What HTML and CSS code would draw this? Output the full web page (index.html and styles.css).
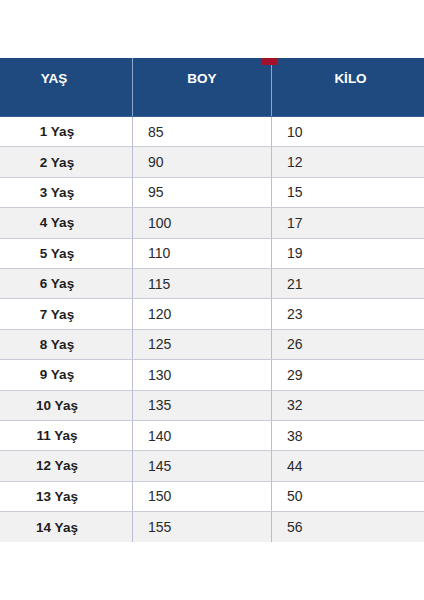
FILE: index.html
```html
<!DOCTYPE html>
<html lang="tr">
<head>
<meta charset="utf-8">
<link rel="stylesheet" href="styles.css">
</head>
<body>
<div class="chart">
  <div class="row head">
    <div class="cell c1">YAŞ</div>
    <div class="cell c2">BOY</div>
    <div class="cell c3">KİLO</div>
    <span class="marker"></span>
  </div>
  <div class="row"><div class="cell c1">1 Yaş</div><div class="cell c2">85</div><div class="cell c3">10</div></div>
  <div class="row alt"><div class="cell c1">2 Yaş</div><div class="cell c2">90</div><div class="cell c3">12</div></div>
  <div class="row"><div class="cell c1">3 Yaş</div><div class="cell c2">95</div><div class="cell c3">15</div></div>
  <div class="row alt"><div class="cell c1">4 Yaş</div><div class="cell c2">100</div><div class="cell c3">17</div></div>
  <div class="row"><div class="cell c1">5 Yaş</div><div class="cell c2">110</div><div class="cell c3">19</div></div>
  <div class="row alt"><div class="cell c1">6 Yaş</div><div class="cell c2">115</div><div class="cell c3">21</div></div>
  <div class="row"><div class="cell c1">7 Yaş</div><div class="cell c2">120</div><div class="cell c3">23</div></div>
  <div class="row alt"><div class="cell c1">8 Yaş</div><div class="cell c2">125</div><div class="cell c3">26</div></div>
  <div class="row"><div class="cell c1">9 Yaş</div><div class="cell c2">130</div><div class="cell c3">29</div></div>
  <div class="row alt"><div class="cell c1">10 Yaş</div><div class="cell c2">135</div><div class="cell c3">32</div></div>
  <div class="row"><div class="cell c1">11 Yaş</div><div class="cell c2">140</div><div class="cell c3">38</div></div>
  <div class="row alt"><div class="cell c1">12 Yaş</div><div class="cell c2">145</div><div class="cell c3">44</div></div>
  <div class="row"><div class="cell c1">13 Yaş</div><div class="cell c2">150</div><div class="cell c3">50</div></div>
  <div class="row alt last"><div class="cell c1">14 Yaş</div><div class="cell c2">155</div><div class="cell c3">56</div></div>
</div>
</body>
</html>
```

FILE: styles.css
```css
html, body {
  margin: 0;
  padding: 0;
  background: #ffffff;
}
body {
  font-family: "Liberation Sans", Arial, sans-serif;
  width: 424px;
  height: 600px;
  overflow: hidden;
}
.chart {
  margin-top: 58px;
  display: flex;
  flex-direction: column;
}
.row {
  display: grid;
  grid-template-columns: 132px 139px 1fr;
  height: 29.4px;
  border-bottom: 1px solid #c9cbd8;
  background: #ffffff;
  position: relative;
}
.row.alt {
  background: #f1f1f2;
}
.row.last {
  border-bottom: none;
  height: 30px;
}
.cell {
  display: flex;
  align-items: center;
  font-size: 14px;
  color: #2a2a2a;
}
.c1 {
  justify-content: center;
  padding-right: 18px;
  font-weight: bold;
  font-size: 13.5px;
  color: #1e1e1e;
}
.c2, .c3 {
  padding-left: 15px;
  border-left: 1.5px solid #b9bdd3;
}
.row.head {
  height: 58px;
  background: #1f4a80;
  border-bottom: 1px solid #3a6196;
}
.head .cell {
  color: #ffffff;
  font-weight: bold;
  font-size: 13.5px;
  align-items: flex-start;
  padding-top: 13px;
  justify-content: center;
  padding-left: 0;
}
.head .c1 {
  padding-right: 24px;
}
.head .c2, .head .c3 {
  border-left: 1.5px solid #8aa6cc;
}
.head .c3 {
  padding-left: 5px;
}
.marker {
  position: absolute;
  left: 262px;
  top: 0;
  width: 15px;
  height: 7px;
  background: #a3102b;
}
```
